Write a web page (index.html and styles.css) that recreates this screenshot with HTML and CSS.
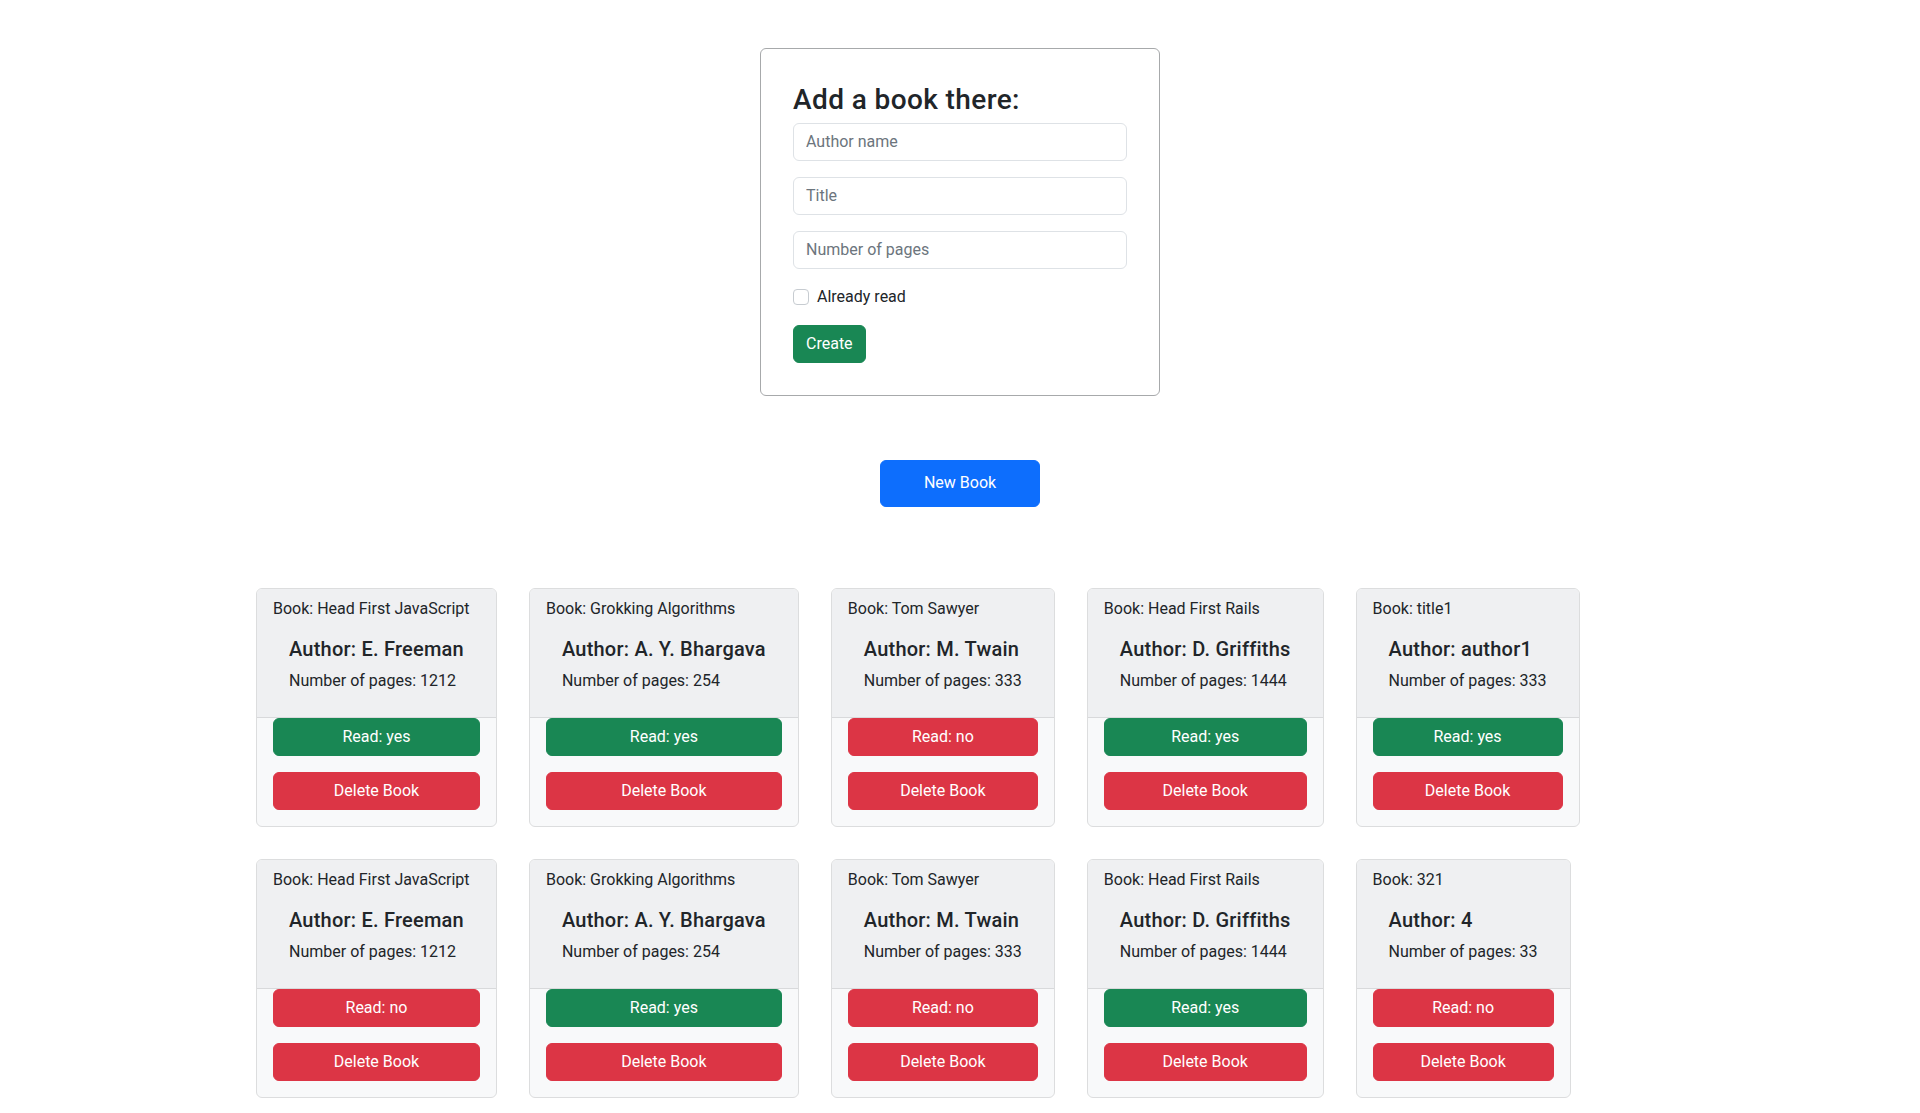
FILE: index.html
```html
<!DOCTYPE html>
<html lang="en">
<head>
<meta charset="utf-8">
<title>Library</title>
<link rel="stylesheet" href="styles.css">
</head>
<body>
<main class="page">
  <form class="form-card">
    <h3 class="form-title">Add a book there:</h3>
    <input class="field" type="text" placeholder="Author name">
    <input class="field" type="text" placeholder="Title">
    <input class="field" type="text" placeholder="Number of pages">
    <label class="check-row"><input class="check" type="checkbox"><span>Already read</span></label>
    <button class="btn btn-success" type="button">Create</button>
  </form>

  <div class="new-row">
    <button class="btn btn-primary btn-new" type="button">New Book</button>
  </div>

  <section class="books">
    <article class="book">
      <div class="book-top">
        <div class="book-title">Book: Head First JavaScript</div>
        <div class="book-body">
          <h5 class="book-author">Author: E. Freeman</h5>
          <p class="book-pages">Number of pages: 1212</p>
        </div>
      </div>
      <div class="book-actions">
        <button class="btn btn-success btn-block" type="button">Read: yes</button>
        <button class="btn btn-danger btn-block" type="button">Delete Book</button>
      </div>
    </article>
    <article class="book">
      <div class="book-top">
        <div class="book-title">Book: Grokking Algorithms</div>
        <div class="book-body">
          <h5 class="book-author">Author: A. Y. Bhargava</h5>
          <p class="book-pages">Number of pages: 254</p>
        </div>
      </div>
      <div class="book-actions">
        <button class="btn btn-success btn-block" type="button">Read: yes</button>
        <button class="btn btn-danger btn-block" type="button">Delete Book</button>
      </div>
    </article>
    <article class="book">
      <div class="book-top">
        <div class="book-title">Book: Tom Sawyer</div>
        <div class="book-body">
          <h5 class="book-author">Author: M. Twain</h5>
          <p class="book-pages">Number of pages: 333</p>
        </div>
      </div>
      <div class="book-actions">
        <button class="btn btn-danger btn-block" type="button">Read: no</button>
        <button class="btn btn-danger btn-block" type="button">Delete Book</button>
      </div>
    </article>
    <article class="book">
      <div class="book-top">
        <div class="book-title">Book: Head First Rails</div>
        <div class="book-body">
          <h5 class="book-author">Author: D. Griffiths</h5>
          <p class="book-pages">Number of pages: 1444</p>
        </div>
      </div>
      <div class="book-actions">
        <button class="btn btn-success btn-block" type="button">Read: yes</button>
        <button class="btn btn-danger btn-block" type="button">Delete Book</button>
      </div>
    </article>
    <article class="book">
      <div class="book-top">
        <div class="book-title">Book: title1</div>
        <div class="book-body">
          <h5 class="book-author">Author: author1</h5>
          <p class="book-pages">Number of pages: 333</p>
        </div>
      </div>
      <div class="book-actions">
        <button class="btn btn-success btn-block" type="button">Read: yes</button>
        <button class="btn btn-danger btn-block" type="button">Delete Book</button>
      </div>
    </article>

    <article class="book">
      <div class="book-top">
        <div class="book-title">Book: Head First JavaScript</div>
        <div class="book-body">
          <h5 class="book-author">Author: E. Freeman</h5>
          <p class="book-pages">Number of pages: 1212</p>
        </div>
      </div>
      <div class="book-actions">
        <button class="btn btn-danger btn-block" type="button">Read: no</button>
        <button class="btn btn-danger btn-block" type="button">Delete Book</button>
      </div>
    </article>
    <article class="book">
      <div class="book-top">
        <div class="book-title">Book: Grokking Algorithms</div>
        <div class="book-body">
          <h5 class="book-author">Author: A. Y. Bhargava</h5>
          <p class="book-pages">Number of pages: 254</p>
        </div>
      </div>
      <div class="book-actions">
        <button class="btn btn-success btn-block" type="button">Read: yes</button>
        <button class="btn btn-danger btn-block" type="button">Delete Book</button>
      </div>
    </article>
    <article class="book">
      <div class="book-top">
        <div class="book-title">Book: Tom Sawyer</div>
        <div class="book-body">
          <h5 class="book-author">Author: M. Twain</h5>
          <p class="book-pages">Number of pages: 333</p>
        </div>
      </div>
      <div class="book-actions">
        <button class="btn btn-danger btn-block" type="button">Read: no</button>
        <button class="btn btn-danger btn-block" type="button">Delete Book</button>
      </div>
    </article>
    <article class="book">
      <div class="book-top">
        <div class="book-title">Book: Head First Rails</div>
        <div class="book-body">
          <h5 class="book-author">Author: D. Griffiths</h5>
          <p class="book-pages">Number of pages: 1444</p>
        </div>
      </div>
      <div class="book-actions">
        <button class="btn btn-success btn-block" type="button">Read: yes</button>
        <button class="btn btn-danger btn-block" type="button">Delete Book</button>
      </div>
    </article>
    <article class="book">
      <div class="book-top">
        <div class="book-title">Book: 321</div>
        <div class="book-body">
          <h5 class="book-author">Author: 4</h5>
          <p class="book-pages">Number of pages: 33</p>
        </div>
      </div>
      <div class="book-actions">
        <button class="btn btn-danger btn-block" type="button">Read: no</button>
        <button class="btn btn-danger btn-block" type="button">Delete Book</button>
      </div>
    </article>
  </section>
</main>
</body>
</html>
```

FILE: styles.css
```css
* {
  box-sizing: border-box;
}

html, body {
  margin: 0;
  padding: 0;
  background: #ffffff;
}

body {
  font-family: Roboto, "Noto Sans", "Liberation Sans", sans-serif;
  font-size: 16px;
  line-height: 1.5;
  color: #212529;
}

.page {
  padding-top: 48px;
  padding-bottom: 16px;
}

/* ---------- form ---------- */
.form-card {
  width: 400px;
  margin: 0 auto;
  padding: 32px;
  border: 1px solid #a7a9ab;
  border-radius: 6px;
  background: #ffffff;
}

.form-title {
  margin: 0 0 6px;
  padding-top: 2px;
  font-size: 28px;
  font-weight: 500;
  line-height: 1.2;
  letter-spacing: 0.4px;
}

.field {
  display: block;
  width: 100%;
  height: 38px;
  margin: 0 0 16px;
  padding: 6px 12px;
  font-family: inherit;
  font-size: 16px;
  line-height: 24px;
  color: #212529;
  background: #ffffff;
  border: 1px solid #dee2e6;
  border-radius: 6px;
  outline: none;
}

.field::placeholder {
  color: #6c757d;
}

.check-row {
  display: flex;
  align-items: center;
  gap: 8px;
  height: 24px;
  margin: 0 0 16px;
}

.check {
  appearance: none;
  -webkit-appearance: none;
  width: 16px;
  height: 16px;
  margin: 0;
  border: 1px solid #c7ccd1;
  border-radius: 4px;
  background: #ffffff;
}

/* ---------- buttons ---------- */
.btn {
  display: inline-block;
  padding: 6px 12px;
  font-family: inherit;
  font-size: 16px;
  font-weight: 400;
  line-height: 24px;
  color: #ffffff;
  text-align: center;
  white-space: nowrap;
  border: 1px solid transparent;
  border-radius: 6px;
  cursor: pointer;
}

.btn-success {
  background: #198754;
  border-color: #198754;
}

.btn-danger {
  background: #dc3545;
  border-color: #dc3545;
}

.btn-primary {
  background: #0d6efd;
  border-color: #0d6efd;
}

.new-row {
  display: flex;
  justify-content: center;
  margin-top: 64px;
}

.btn-new {
  width: 160px;
  height: 47px;
  padding: 0;
}

/* ---------- books ---------- */
.books {
  display: flex;
  flex-wrap: wrap;
  align-items: flex-start;
  gap: 32px;
  width: 1408px;
  margin: 81px auto 0;
}

.book {
  display: flex;
  flex-direction: column;
  background: #f8f9fa;
  border: 1px solid #dcddde;
  border-radius: 6px;
  overflow: hidden;
}

.book-top {
  padding: 8px 16px;
  background: #eff0f2;
  border-bottom: 1px solid #d8d9db;
}

.book-title {
  line-height: 24px;
  white-space: nowrap;
}

.book-body {
  padding: 16px;
}

.book-author {
  margin: 0 0 8px;
  font-size: 20px;
  font-weight: 500;
  line-height: 1.2;
  letter-spacing: 0.22px;
  white-space: nowrap;
}

.book-pages {
  margin: 0;
  line-height: 24px;
  white-space: nowrap;
}

.book-actions {
  display: flex;
  flex-direction: column;
  gap: 16px;
  padding: 0 16px 16px;
}

.btn-block {
  display: block;
  width: 100%;
}
```
